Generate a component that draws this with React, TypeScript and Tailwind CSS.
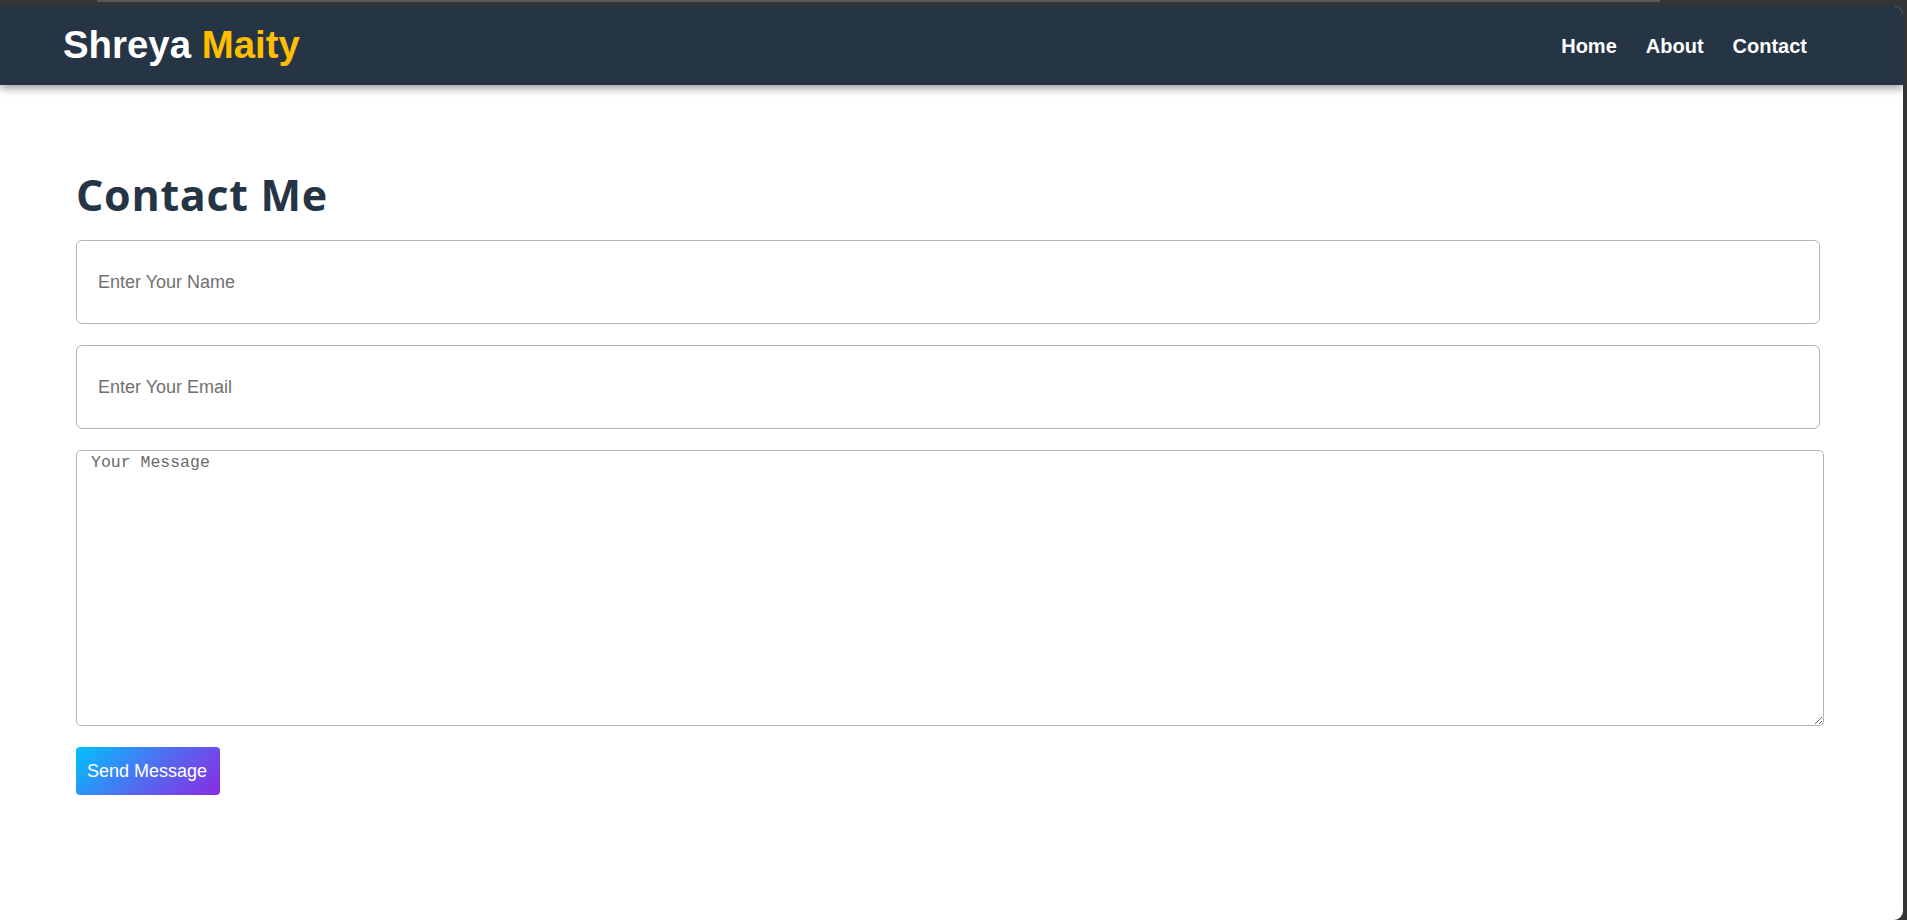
import React from "react";

export default function App() {
  return (
    <div className="h-[920px] w-[1907px] bg-[#353535] pt-[6px] pr-[4px] relative overflow-hidden">
      <div className="absolute top-0 left-[97px] w-[1563px] h-[2px] bg-[#5a5a5a]" />
      <div className="relative h-full bg-white rounded-tr-[9px] rounded-br-[9px] overflow-hidden">
        <header className="relative z-10 h-[79px] bg-[#253545] flex items-center justify-between pl-[63px] pr-[96px] shadow-[0_4px_8px_rgba(0,0,0,0.35)] font-['Liberation_Sans',Arial,sans-serif]">
          <div className="text-[38.4px] font-bold leading-none text-white">
            Shreya <span className="text-[#ffbf00]">Maity</span>
          </div>
          <nav className="flex items-center gap-[29px] text-[20px] font-bold text-white">
            <a href="#">Home</a>
            <a href="#">About</a>
            <a href="#">Contact</a>
          </nav>
        </header>
        <main className="pl-[76px] pt-[88px]">
          <h1 className="text-[43px] font-bold leading-none text-[#253545] font-['Open_Sans',sans-serif] tracking-[0.7px]">
            Contact Me
          </h1>
          <form className="mt-[24px] flex flex-col gap-[21px] items-start font-['Liberation_Sans',Arial,sans-serif]">
            <input
              type="text"
              placeholder="Enter Your Name"
              className="w-[1744px] h-[84px] border border-[#b4b4b4] rounded-[6px] pl-[21px] text-[18px] placeholder:text-[#707070] outline-none"
            />
            <input
              type="email"
              placeholder="Enter Your Email"
              className="w-[1744px] h-[84px] border border-[#b4b4b4] rounded-[6px] pl-[21px] text-[18px] placeholder:text-[#707070] outline-none"
            />
            <textarea
              placeholder="Your Message"
              className="w-[1748px] h-[276px] border border-[#b4b4b4] rounded-[5px] pl-[14px] pt-0 text-[16.5px] font-['Liberation_Mono',monospace] placeholder:text-[#6a6a6a] outline-none"
            />
            <button
              type="button"
              className="w-[144px] h-[48px] rounded-[4px] text-white text-[18px] pr-[2px] bg-[linear-gradient(135deg,#00c3ff,#4f6ef0_50%,#8a2be2)]"
            >
              Send Message
            </button>
          </form>
        </main>
      </div>
    </div>
  );
}
